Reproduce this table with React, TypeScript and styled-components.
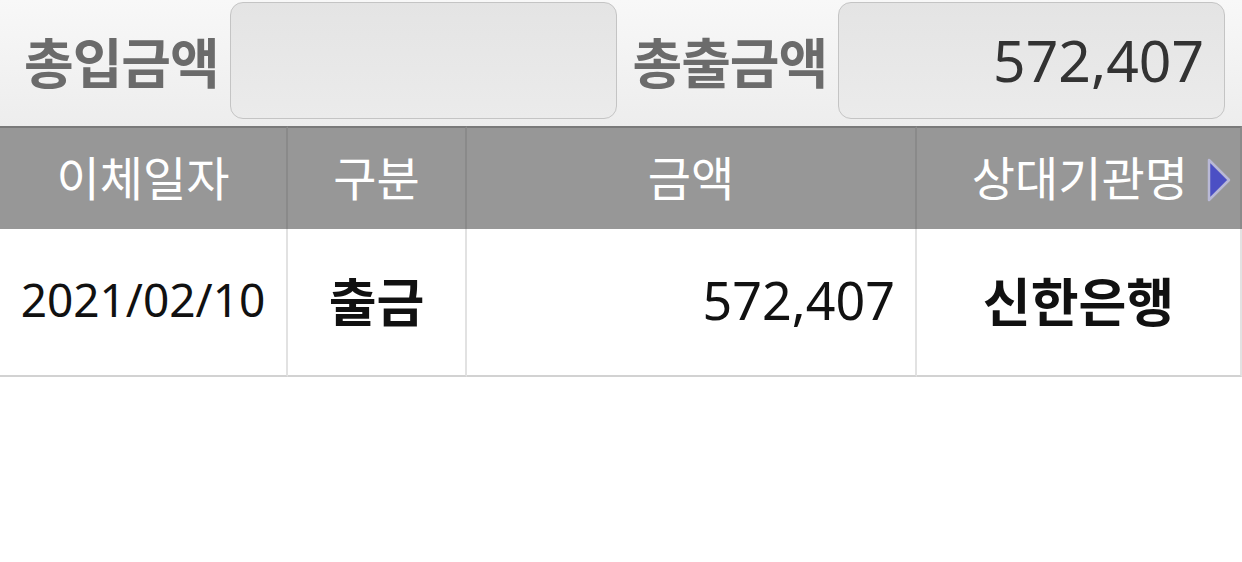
import React from 'react';
import styled, { createGlobalStyle } from 'styled-components';

const GlobalStyle = createGlobalStyle`
  html, body {
    margin: 0;
    padding: 0;
    background: #ffffff;
  }
  body {
    font-family: "Noto Sans", "Noto Sans CJK KR", sans-serif;
  }
`;

const Page = styled.div`
  width: 1242px;
  height: 562px;
  background: #ffffff;
  overflow: hidden;
`;

const SummaryBar = styled.div`
  height: 126px;
  display: flex;
  align-items: center;
  padding: 0 17px 0 24px;
  box-sizing: border-box;
  background: linear-gradient(#f8f8f8, #ededed);
`;

const SummaryLabel = styled.div`
  font-family: "Noto Sans CJK KR", sans-serif;
  font-weight: 700;
  font-size: 54px;
  color: #6b6b6b;
  white-space: nowrap;
  width: 198px;
  margin-right: 8px;
  margin-top: -6px;
  letter-spacing: -1px;
`;

const AmountBox = styled.div<{ $gapRight?: number }>`
  width: 387px;
  height: 117px;
  margin-top: -6px;
  margin-right: ${p => p.$gapRight ?? 0}px;
  box-sizing: border-box;
  border: 1.5px solid #c4c4c4;
  border-radius: 13px;
  background: linear-gradient(#e4e4e4, #ebebeb);
  display: flex;
  align-items: center;
  justify-content: flex-end;
  padding-right: 20px;
  font-family: "Noto Sans", sans-serif;
  font-size: 57px;
  color: #333333;
`;

const Table = styled.div`
  display: grid;
  grid-template-columns: 288px 179px 450px 325px;
`;

const HeadCell = styled.div<{ $last?: boolean }>`
  height: 103px;
  box-sizing: border-box;
  background: #979797;
  border-top: 2px solid #7a7a7a;
  border-right: 2px solid #8a8a8a;
  display: flex;
  align-items: center;
  justify-content: ${p => (p.$last ? 'flex-end' : 'center')};
  padding-right: ${p => (p.$last ? '8px' : '0')};
  padding-bottom: 6px;
  font-family: "Noto Sans CJK KR", sans-serif;
  font-weight: 400;
  font-size: 47px;
  color: #ffffff;
  white-space: nowrap;
`;

const Arrow = styled.svg`
  width: 26px;
  height: 46px;
  margin-left: 18px;
  margin-top: 8px;
`;

const BodyCell = styled.div<{ $align?: 'center' | 'right'; $bold?: boolean; $size?: number }>`
  height: 148px;
  box-sizing: border-box;
  border-right: 2px solid #e2e2e2;
  border-bottom: 2px solid #d2d2d2;
  display: flex;
  align-items: center;
  justify-content: ${p => (p.$align === 'right' ? 'flex-end' : 'center')};
  padding-right: ${p => (p.$align === 'right' ? '20px' : '0')};
  padding-bottom: 6px;
  font-family: "Noto Sans", "Noto Sans CJK KR", sans-serif;
  font-weight: ${p => (p.$bold ? 700 : 400)};
  font-size: ${p => p.$size ?? 48}px;
  color: #111111;
  white-space: nowrap;
`;

const App: React.FC = () => {
  return (
    <Page>
      <GlobalStyle />
      <SummaryBar>
        <SummaryLabel>총입금액</SummaryLabel>
        <AmountBox $gapRight={16} />
        <SummaryLabel>총출금액</SummaryLabel>
        <AmountBox>572,407</AmountBox>
      </SummaryBar>

      <Table>
        <HeadCell>이체일자</HeadCell>
        <HeadCell>구분</HeadCell>
        <HeadCell>금액</HeadCell>
        <HeadCell $last>
          상대기관명
          <Arrow viewBox="0 0 26 46">
            <path d="M3 3 L23 23 L3 43 Z" fill="#4b4fc4" stroke="#b9b9d6" strokeWidth="2.5" strokeLinejoin="round" />
          </Arrow>
        </HeadCell>

        <BodyCell $size={46}>2021/02/10</BodyCell>
        <BodyCell $bold $size={52}>출금</BodyCell>
        <BodyCell $align="right" $size={52}>572,407</BodyCell>
        <BodyCell $bold $size={52}>신한은행</BodyCell>
      </Table>
    </Page>
  );
};

export default App;
